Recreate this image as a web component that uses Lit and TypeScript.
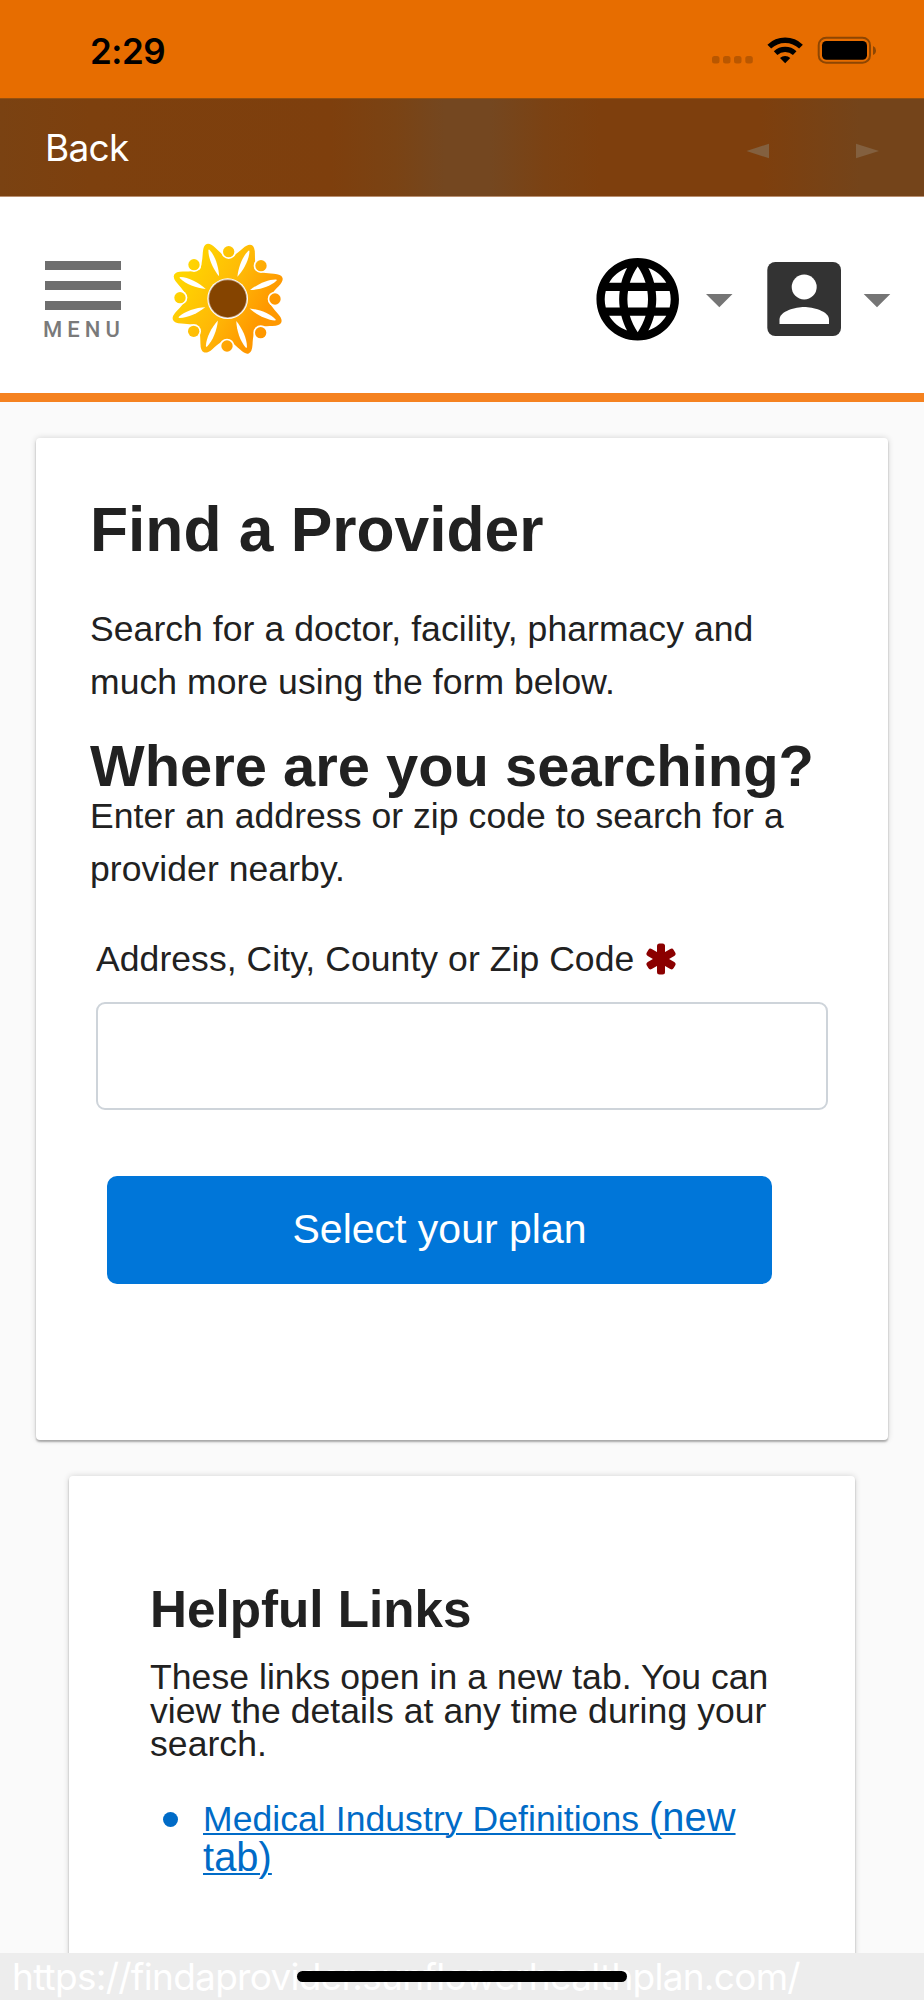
import { LitElement, html, svg, css } from "lit";
import { customElement } from "lit/decorators.js";

const PETALS = [24, 69, 114, 159, 204, 249, 294, 339];
const DOTS = [[206, 50], [303, 92], [345, 192], [302, 293], [201, 333], [101, 289], [60, 188], [102, 89]];

@customElement("sunflower-logo")
class SunflowerLogo extends LitElement {
  static styles = css`
    :host { display: block; width: 135px; height: 130px; }
    svg { display: block; }
  `;
  render() {
    return html`<svg width="135" height="130" viewBox="0 0 405 390">
      <defs>
        <linearGradient id="gold" gradientUnits="userSpaceOnUse" x1="60" y1="100" x2="350" y2="270">
          <stop offset="0" stop-color="#ffd800" />
          <stop offset="0.5" stop-color="#ffb807" />
          <stop offset="0.85" stop-color="#ff9800" />
        </linearGradient>
        <mask id="bloom" maskUnits="userSpaceOnUse" x="0" y="0" width="405" height="390">
          <g transform="translate(203 191)">
            ${PETALS.map((a) => svg`<path transform="rotate(${a})" fill="#fff"
              d="M0 0 L-48 -110 C-38 -120 -30 -134 -20 -156 Q-11 -176 0 -176 Q11 -176 20 -156 C30 -134 38 -120 48 -110 Z" />`)}
            ${PETALS.map((a) => svg`<path transform="rotate(${a})" fill="#000"
              d="M0 -72 C-9 -98 -11 -134 -2 -156 Q0 -160 2 -156 C11 -134 9 -98 0 -72 Z" />`)}
            <circle r="61" fill="#000" />
          </g>
          ${DOTS.map(([x, y]) => svg`<circle cx=${x} cy=${y} r="22" fill="#000" /><circle cx=${x} cy=${y} r="17" fill="#fff" />`)}
        </mask>
      </defs>
      <rect width="405" height="390" fill="url(#gold)" mask="url(#bloom)" />
      <circle cx="203" cy="191" r="58" fill="#c4a88e" />
      <circle cx="203" cy="191" r="55.500" fill="#854400" />
    </svg>`;
  }
}

@customElement("app-root")
class AppRoot extends LitElement {
  static styles = css`
    :host {
      display: block; position: relative; width: 924px; height: 2000px; overflow: hidden;
      background: #fafafa; color: #212121; font-family: "Liberation Sans", Arial, sans-serif;
    }
    * { box-sizing: border-box; }
    h1, h2, h3, p, ul { margin: 0; padding: 0; }
    svg { display: block; flex: none; }
    .status {
      height: 98px; background: #e76d00; display: flex; align-items: flex-start;
      justify-content: space-between; padding: 0 47px 0 90px;
    }
    .time { font: 600 35px/44px Inter, sans-serif; color: #000; margin-top: 29px; letter-spacing: -0.5px; }
    .system { margin-top: 34px; }
    .browser {
      height: 99px; display: flex; align-items: center; justify-content: space-between;
      padding: 0 45px 0 45px; border-top: 1px solid #94500f; border-bottom: 1px solid #b98f70;
      background: linear-gradient(90deg, #7a4212 0, #7d400e 90px, #7e3f0d 330px, #7a4314 395px, #744720 445px, #744720 490px, #7b4213 545px, #7e3f0d 600px, #7e3f0d 760px, #74441a 860px, #74441a 924px);
    }
    .back { font: 400 37px/48px Inter, sans-serif; color: #fff; letter-spacing: -0.7px; }
    .arrows { margin-top: 7px; }
    .header {
      height: 205px; background: #fff; border-bottom: 9px solid #f58220; display: flex;
      align-items: flex-start; justify-content: space-between;
    }
    .brand { display: flex; padding-left: 45px; }
    .menu { width: 76px; padding-top: 64px; margin-right: 39px; }
    .bar { height: 9px; margin-bottom: 11px; background: #6e6e6e; }
    .menu-text { font: 500 22px/24px Roboto, sans-serif; letter-spacing: 5.1px; color: #7a7a7a; margin-top: -3px; white-space: nowrap; margin-left: -2px; }
    sunflower-logo { margin-top: 38px; }
    .card { background: #fff; border-radius: 4px; box-shadow: 0 2px 2px rgba(0,0,0,.28), 0 0 6px rgba(0,0,0,.16); }
    .search { margin: 36px 36px 0; height: 1001.5px; padding: 60.5px 54px 0; }
    .line { display: block; white-space: nowrap; }
    h1 { font-size: 62.3px; line-height: 62px; }
    .copy { font-size: 35.5px; line-height: 53.5px; letter-spacing: 0.07px; }
    .intro { margin-top: 42px; }
    h2 { font-size: 57.9px; line-height: 48px; margin-top: 32.3px; white-space: nowrap; }
    .label { display: flex; font-size: 35.5px; letter-spacing: 0.07px; line-height: 54px; margin: 35px 0 0 6px; gap: 12px; white-space: nowrap; }
    .star { margin-top: 11px; }
    .field { display: block; width: 732px; height: 108px; margin: 16px 0 0 6px; border: 2px solid #ced4da; border-radius: 9px; background: #fff; }
    .submit {
      display: block; width: 665px; height: 107.5px; margin: 66.5px 0 0 17px; border: 0; border-radius: 10px;
      background: #0076d9; color: #fff; font: 41px/54px "Liberation Sans", Arial, sans-serif; padding: 0 0 2px;
    }
    .links { margin: 36px 69px 0; height: 560px; padding: 108px 81px 0; }
    h3 { font-size: 51.2px; line-height: 52px; }
    .note { font-size: 35.5px; letter-spacing: 0.07px; line-height: 33.5px; margin-top: 25.5px; }
    .list { list-style: none; display: flex; margin-top: 36px; color: #006bc7; }
    .item { display: flex; gap: 25px; padding-left: 13px; }
    .dot { width: 15px; height: 15px; border-radius: 50%; background: #006bc7; margin-top: 14px; }
    .link { font-size: 35.5px; letter-spacing: 0.07px; line-height: 38.5px; color: #006bc7; text-decoration: underline; text-decoration-thickness: 2px; text-underline-offset: 2px; }
    .big { font-size: 39.8px; }
    .footer {
      position: absolute; left: 0; bottom: 0; width: 924px; height: 47px; background: #ededed;
      color: #fff; font: 400 37px/46px Inter, sans-serif; letter-spacing: -0.73px; padding: 1px 0 0 12px; white-space: nowrap;
    }
    .home { position: absolute; left: 297px; bottom: 18px; width: 330px; height: 11px; border-radius: 6px; background: #000; }
  `;
  render() {
    return html`
      <div class="status">
        <span class="time">2:29</span>
        <svg class="system" width="166" height="34" viewBox="711 34 166 34">
          <g fill="#b95700">
            <rect x="712" y="56" width="7.5" height="7.5" rx="2.5" /><rect x="723" y="56" width="7.5" height="7.5" rx="2.5" />
            <rect x="734" y="56" width="7.5" height="7.5" rx="2.5" /><rect x="745.3" y="56" width="7.5" height="7.5" rx="2.5" />
          </g>
          <path d="M769.3 46.6 A23 23 0 0 1 801 46.6" fill="none" stroke="#000" stroke-width="5.4" />
          <path d="M775.6 53.2 A14 14 0 0 1 794.7 53.2" fill="none" stroke="#000" stroke-width="5.2" />
          <path d="M780 58 A7.5 7.5 0 0 1 790.3 58 L785.2 63.2 Z" fill="#000" />
          <rect x="818.7" y="37.7" width="51.3" height="25" rx="7.5" fill="none" stroke="#8d4603" stroke-width="2" />
          <rect x="822" y="41" width="45" height="18.7" rx="4.5" fill="#000" />
          <path d="M873 46 Q876 47.5 876 50.4 Q876 53.5 873 55 Z" fill="#8d4603" />
        </svg>
      </div>
      <div class="browser">
        <span class="back">Back</span>
        <svg class="arrows" width="133" height="16" viewBox="746 143 133 16" fill="#83603f">
          <path d="M746.5 151 L769 143.7 V158.3 Z" /><path d="M879 151 L856 143.7 V158.3 Z" />
        </svg>
      </div>
      <div class="header">
        <div class="brand">
          <div class="menu">
            <div class="bar"></div><div class="bar"></div><div class="bar"></div>
            <div class="menu-text">MENU</div>
          </div>
          <sunflower-logo></sunflower-logo>
        </div>
        <svg width="336" height="196" viewBox="588 197 336 196">
          <g transform="translate(588.2 249.8) scale(4.125)">
            <path fill="#000" d="M11.99 2C6.47 2 2 6.48 2 12s4.47 10 9.99 10C17.52 22 22 17.52 22 12S17.52 2 11.99 2zm6.93 6h-2.95c-.32-1.25-.78-2.45-1.38-3.56 1.84.63 3.37 1.91 4.33 3.56zM12 4.04c.83 1.2 1.48 2.53 1.91 3.96h-3.82c.43-1.43 1.08-2.76 1.91-3.96zM4.26 14C4.1 13.36 4 12.69 4 12s.1-1.36.26-2h3.38c-.08.66-.14 1.32-.14 2s.06 1.34.14 2H4.26zm.82 2h2.95c.32 1.25.78 2.45 1.38 3.56-1.84-.63-3.37-1.9-4.33-3.56zm2.95-8H5.08c.96-1.66 2.49-2.93 4.33-3.56C8.81 5.55 8.35 6.75 8.03 8zM12 19.96c-.83-1.2-1.48-2.53-1.91-3.96h3.82c-.43 1.43-1.08 2.76-1.91 3.96zM14.34 14H9.66c-.09-.66-.16-1.32-.16-2s.07-1.35.16-2h4.68c.09.65.16 1.32.16 2s-.07 1.34-.16 2zm.25 5.56c.6-1.11 1.06-2.31 1.38-3.56h2.95c-.96 1.65-2.49 2.93-4.33 3.56zM16.36 14c.08-.66.14-1.32.14-2s-.06-1.34-.14-2h3.38c.16.64.26 1.31.26 2s-.1 1.36-.26 2h-3.38z" />
          </g>
          <path d="M706 294 H732.5 L719.3 307.3 Z M863.7 294 H890.3 L877 307.3 Z" fill="#757575" />
          <rect x="767.3" y="262" width="73.7" height="74" rx="8" fill="#333" />
          <circle cx="804.2" cy="287" r="12.5" fill="#fff" />
          <path d="M779.5 324 V319.5 C779.5 311 796 307 804.2 307 S829 311 829 319.5 V324 Z" fill="#fff" />
        </svg>
      </div>
      <section class="card search">
        <h1>Find a Provider</h1>
        <p class="copy intro"><span class="line">Search for a doctor, facility, pharmacy and</span><span class="line">much more using the form below.</span></p>
        <h2>Where are you searching?</h2>
        <p class="copy"><span class="line">Enter an address or zip code to search for a</span><span class="line">provider nearby.</span></p>
        <label class="label" for="address">Address, City, County or Zip Code
          <svg class="star" width="30" height="32" viewBox="-15 -16 30 32" fill="#8b0000">
            ${[0, 60, 120].map((a) => svg`<rect transform="rotate(${a})" x="-4" y="-15.500" width="8" height="31" rx="2.500" />`)}
          </svg>
        </label>
        <input class="field" id="address" />
        <button class="submit">Select your plan</button>
      </section>
      <section class="card links">
        <h3>Helpful Links</h3>
        <p class="note"><span class="line">These links open in a new tab. You can</span><span class="line">view the details at any time during your</span><span class="line">search.</span></p>
        <ul class="list">
          <li class="item"><span class="dot"></span><a class="link">Medical Industry Definitions <span class="big">(new<br />tab)</span></a></li>
        </ul>
      </section>
      <div class="footer">https://findaprovider.sunflowerhealthplan.com/</div>
      <div class="home"></div>
    `;
  }
}
